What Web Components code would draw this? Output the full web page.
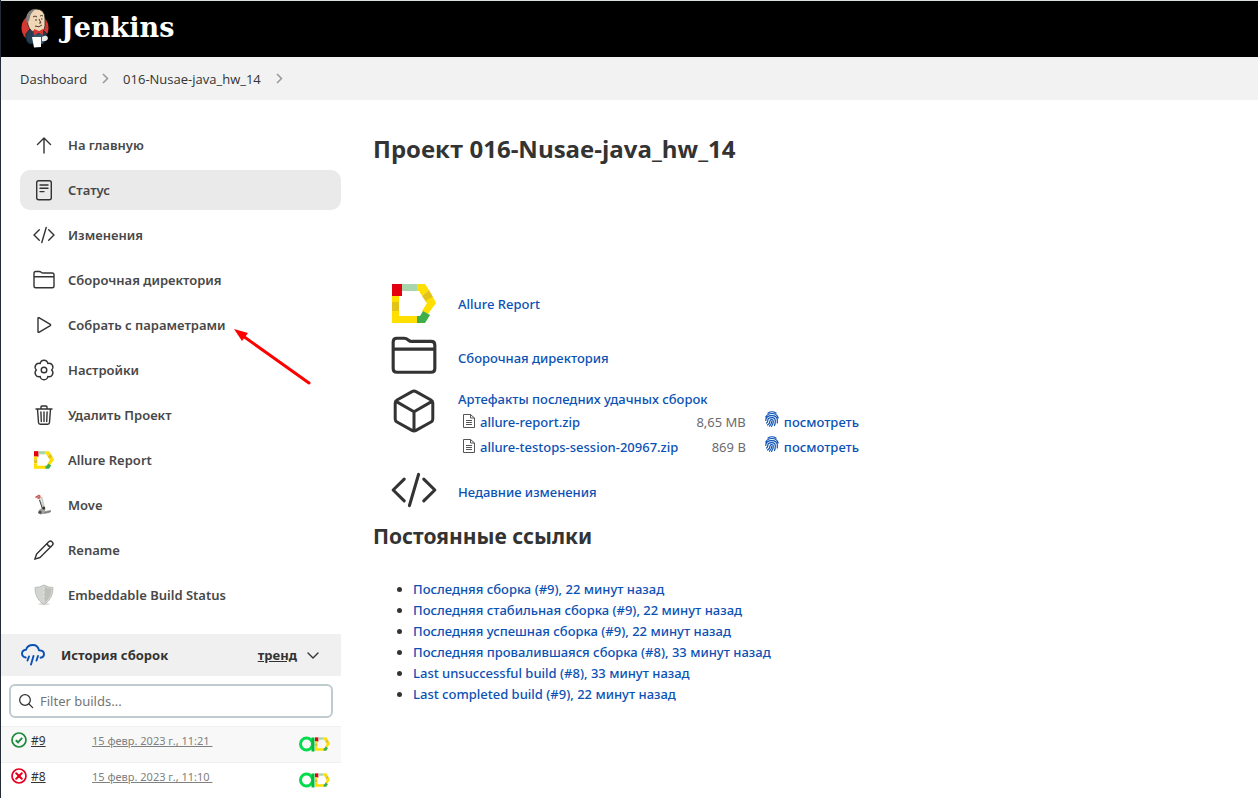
<!DOCTYPE html>
<html lang="ru">
<head>
<meta charset="utf-8">
<meta name="viewport" content="width=device-width, initial-scale=1">
<title>016-Nusae-java_hw_14 [Jenkins]</title>
<style>
  html { background: #fff; }
  body {
    margin: 0;
    font: 500 13px/20px "Noto Sans", "Open Sans", sans-serif;
    color: #333;
    --link: #0b51b4;
    --bar: #f2f2f2;
    --muted: #808080;
  }
</style>
</head>
<body>
<jenkins-page></jenkins-page>

<script>
const ALLURE = `
  <path fill="#e3000f" d="M0 0h10v12H0z"/>
  <path fill="#a8d5ab" d="M10 0h15v7H10z"/>
  <path fill="#ffdf00" d="M25 0h8l4 6-7 6-3-5h-2z"/>
  <path fill="#e2c317" d="M37 6l4 7-7 5-4-6z"/>
  <path fill="#ffdf00" d="M41 13l3 6-8 11-6-3 5-8-2-2z"/>
  <path fill="#ffdf00" d="M0 12h7v6H0z"/>
  <path fill="#e2c317" d="M0 18h7v9H0z"/>
  <path fill="#ffdf00" d="M0 27h7v5h18v7H0z"/>
  <path fill="#3fae49" d="M31 27l7 4-5 8h-8v-7h3z"/>`;
const FINGER = `<g fill="none" stroke="currentColor" stroke-width="1.200" stroke-linecap="round">
  <path d="M3 2Q7 -.5 11 2M.8 6Q2.500 2.500 7 2.500Q12 2.500 13.200 7M.8 9.500Q.5 4.800 7 4.700Q12 4.700 12.300 9V12M1.500 12Q3 11 2.800 9Q3 6.700 7 6.700Q10.300 6.700 10.300 10Q10.300 13 9.500 14.500M2.500 14Q5 12.500 5 10Q5 8.600 6.700 8.600Q8.300 8.600 8.300 10.300Q8.300 13 6.500 15.500M6.700 10.500Q6.700 13 4.500 15"/></g>`;

/* name: [viewBox, markup] */
const ICONS = {
  up: ['0 0 24 24', '<path class="s" d="M5.500 11.500 12 5l6.500 6.500M12 5v15"/>'],
  doc: ['0 0 24 24', '<rect class="s" x="4.700" y="2.700" width="14.600" height="19" rx="2"/><path class="s" d="M8 7h8M8 10.300h8M8 13.600h4"/>'],
  code: ['0 0 24 24', '<path class="s" d="M7.300 6.800 2 12l5.300 5.200M16.700 6.800 22 12l-5.300 5.200M14.200 4.500 9.800 19.500"/>'],
  folder: ['0 0 24 24', '<path class="s" d="M2 18V5.300Q2 3.500 3.800 3.500H7.300Q8.300 3.500 9.200 4.300T11.200 5H20.200Q22 5 22 6.800V18Q22 19.800 20.200 19.800H3.800Q2 19.800 2 18ZM2 8.700H22"/>'],
  play: ['0 0 24 24', '<path class="s" d="M6 5.200v13.600q0 .9.900.5L18.300 12.600q.7-.6 0-1.200L6.900 4.700Q6 4.300 6 5.200z"/>'],
  gear: ['0 0 24 24', '<path class="s" d="M19.600 12A3.850 3.850 0 0 1 15.800 18.500A3.850 3.850 0 0 1 8.200 18.500A3.850 3.850 0 0 1 4.400 12A3.850 3.850 0 0 1 8.200 5.500A3.850 3.850 0 0 1 15.800 5.500A3.850 3.850 0 0 1 19.600 12Z"/><circle class="s" cx="12" cy="12" r="2.800"/>'],
  trash: ['0 0 24 24', '<path class="s" d="M4 6h16M5.500 6l1 13.500q.1 1.800 1.800 1.800h7.400q1.700 0 1.800-1.800L18.500 6M9 6V3.900q0-.9.900-.9h4.200q.9 0 .9.900V6M12 9v9.500M8.900 9l.4 9.500M15.100 9l-.4 9.500"/>'],
  pencil: ['0 0 24 24', '<path class="s" d="M2.800 21.200 4.600 16 16.800 3.800q1.700-1.500 3.400.1t.1 3.300L8 19.500zM15 5.500q1 3 3.800 3.400"/>'],
  allure: ['0 0 44 39', ALLURE],
  move: ['0 0 24 24', '<path d="M7 4l5 14M9.500 4l3.500 13" fill="none" stroke="#c9c9c5" stroke-width="1.500"/><path d="M7.500 7l3 9" fill="none" stroke="#444" stroke-width="1"/><path d="M3.500 4.500 7 2.500l1.500 1M5.500 5.500 8.500 4" fill="none" stroke="#c95b5b" stroke-width="1.500"/><path d="M7 17l4-3 2 1v3l6-1-1 3-10 1.500z" fill="#a4a5a0"/><circle cx="8" cy="19.300" r="1.800" fill="#555"/><circle cx="11.700" cy="15" r="1.500" fill="#333"/><path d="M12 20l7-2" stroke="#777"/>'],
  shield: ['0 0 24 24', '<ellipse cx="12" cy="21" rx="6" ry="1.200" fill="#ddd"/><path d="M3 4.500Q8 4.500 12 2q4 2.500 9 2.500Q21 16 12 21.500 3 16 3 4.500z" fill="#d3d5d1" stroke="#bcbeba"/><path d="M12 3.500q3 2 7.500 2.200Q19 15.500 12 20z" fill="#bec0bc"/><path d="M12 4v16" stroke="#e2e2e2" stroke-width="1" stroke-dasharray="3 1"/>'],
  cloud: ['0 0 24 24', '<path fill="none" stroke="#0b51b4" stroke-width="1.900" stroke-linecap="round" stroke-linejoin="round" d="M4.800 14.500Q1 13.700 1 10.500 1 7.200 5 6.700 6.500 2 12 2q4.600 0 6 5.200 5 .2 5 4 0 3-3.500 3.500M8 13.500 6.500 17.500M12.500 13 10 21.500M17 13 15.500 17.500"/>'],
  chevron: ['0 0 24 24', '<path class="s" d="M7 10l5 5 5-5"/>'],
  search: ['0 0 24 24', '<circle class="s" cx="10.500" cy="10.500" r="8"/><path class="s" d="M16.500 16.500l5.500 5.500"/>'],
  crumb: ['0 0 16 16', '<path d="M6 3 10.500 7.500 6 12" fill="none" stroke="#999" stroke-width="1.500"/>'],
  ok: ['0 0 16 16', '<circle cx="8" cy="8" r="7" fill="none" stroke="#1c8b3c" stroke-width="1.700"/><path d="M4.800 8.300 7 10.300l4.200-4.500" fill="none" stroke="#1c8b3c" stroke-width="1.900"/>'],
  fail: ['0 0 16 16', '<circle cx="8" cy="8" r="7" fill="none" stroke="#e6001f" stroke-width="1.700"/><path d="M5.200 5.200l5.600 5.600M10.800 5.200l-5.600 5.600" stroke="#e6001f" stroke-width="2" stroke-linecap="round"/>'],
  cube: ['0 0 24 24', '<path class="s" d="M12 2q.5 0 1 .3l7.500 4.200q.9.500.9 1.500v8q0 1-.9 1.500L13 21.700q-1 .6-2 0l-7.500-4.200q-.9-.5-.9-1.500V8q0-1 .9-1.500L11 2.300q.5-.3 1-.3zM3 7.200l9 5.200 9-5.200M12 12.400V22"/>'],
  file: ['0 0 12 14', '<path d="M1 .5h6.500L11.500 4v9.500H.5V.5zM7.500.5V4h4M3 6.500h6M3 8.500h6M3 10.500h6" fill="none" stroke="#555"/>'],
  finger: ['0 0 14 16', FINGER],
  testops: ['0 0 16 16', '<circle cx="7.500" cy="8" r="6" fill="none" stroke="#04dc4c" stroke-width="3"/><path d="M14 1.500v14" stroke="#06b83f" stroke-width="3"/>'],
  butler: ['0 0 28 40', `
    <ellipse cx="14" cy="20" rx="13.500" ry="14" fill="#d33833"/>
    <path d="M5 26q-1 8 4 10l14-1 3-9-5-5H9z" fill="#243f52" stroke="#0d1c26" stroke-width=".8"/>
    <path d="M6 11Q6 1 15 1q9 0 9 10v7q-1 7-8 7-7-1-9-8z" fill="#f0d6b7" stroke="#26221d" stroke-width=".8"/>
    <path d="M6 15q-2-6 1-10 3-4 8-4-5 3-6 8l-1 4z" fill="#81807b"/>
    <path d="M12 9q2-2 4 0M19 8q2-1 3 0M14 12h2M20 11h1.500M18 11l2 4h-2M14 18q4 2 7-1" fill="none" stroke="#48382d" stroke-width="1"/>
    <path d="M12 22l5 5 5-4v13h-9z" fill="#35566b"/>
    <path d="M13 21l5 2 4-2v6l-4-2-5 2z" fill="#d33833"/>
    <path d="M11 29h9v10l-7 .5z" fill="#fff"/>
    <path d="M21 29q5-3 6 1-1 4-6 3z" fill="#e9e9e9"/>`]
};

class JIcon extends HTMLElement {
  connectedCallback() {
    const [box, body] = ICONS[this.getAttribute('name')];
    const root = this.attachShadow({ mode: 'open' });
    root.innerHTML = `<style>
      :host { display: block; flex: none; width: 24px; height: 24px; color: #333; }
      :host([name=finger]) { color: inherit; }
      svg { display: block; width: 100%; height: 100%; }
      .s { fill: none; stroke: currentColor; stroke-width: var(--stroke, 1.400); stroke-linecap: round; stroke-linejoin: round; }
    </style><svg viewBox="${box}" aria-hidden="true">${body}</svg>`;
  }
}
customElements.define('j-icon', JIcon);

function define(name, html) {
  const template = document.createElement('template');
  template.innerHTML = html;
  customElements.define(name, class extends HTMLElement {
    constructor() {
      super();
      this.attachShadow({ mode: 'open' }).append(template.content.cloneNode(true));
    }
  });
}

define('jenkins-header', `
  <style>
    :host { display: block; background: #000; border-top: 1px solid #d9dfe0; }
    a { display: flex; align-items: center; gap: 12px; width: max-content; height: 54px; padding: 0 0 2px 20px;
        color: #fff; text-decoration: none; font: bold 27px/36px "DejaVu Serif", serif; }
    j-icon { width: 28px; height: 40px; }
  </style>
  <a href="#home"><j-icon name="butler"></j-icon><span>Jenkins</span></a>`);

define('jenkins-crumbs', `
  <style>
    :host { display: block; background: var(--bar); }
    ol { display: flex; align-items: center; gap: 10px; height: 43px; margin: 0; padding: 0 0 0 19px; list-style: none; font-family: "Open Sans", sans-serif; font-weight: 400; }
    li { display: flex; align-items: center; gap: 10px; }
    a { color: inherit; text-decoration: none; }
    j-icon { width: 16px; height: 16px; }
  </style>
  <nav aria-label="Breadcrumb"><ol>
    <li><a href="#dashboard">Dashboard</a><j-icon name="crumb"></j-icon></li>
    <li><a href="#project">016-Nusae-java_hw_14</a><j-icon name="crumb"></j-icon></li>
  </ol></nav>`);

define('side-task', `
  <style>
    :host { display: block; border-radius: 10px; }
    :host([active]) { background: #eaeaea; }
    ::slotted(a) { display: flex; align-items: center; gap: 12px; height: 40px; padding: 0 12px; color: inherit; text-decoration: none; }
  </style>
  <slot></slot>`);

define('side-tasks', `
  <style>
    :host { display: block; padding: 25px 0 19px 19px; }
    nav { display: grid; gap: 5px; font-weight: 600; color: #484848; }
    j-icon[name=allure] { width: 20px; height: 18px; margin: 0 2px; }
  </style>
  <nav aria-label="Задачи">
    <side-task><a href="#up"><j-icon name="up"></j-icon>На главную</a></side-task>
    <side-task active><a href="#status"><j-icon name="doc"></j-icon>Статус</a></side-task>
    <side-task><a href="#changes"><j-icon name="code"></j-icon>Изменения</a></side-task>
    <side-task><a href="#ws"><j-icon name="folder"></j-icon>Сборочная директория</a></side-task>
    <side-task><a href="#build"><j-icon name="play"></j-icon>Собрать с параметрами</a></side-task>
    <side-task><a href="#configure"><j-icon name="gear"></j-icon>Настройки</a></side-task>
    <side-task><a href="#delete"><j-icon name="trash"></j-icon>Удалить Проект</a></side-task>
    <side-task><a href="#allure"><j-icon name="allure"></j-icon>Allure Report</a></side-task>
    <side-task><a href="#move"><j-icon name="move"></j-icon>Move</a></side-task>
    <side-task><a href="#rename"><j-icon name="pencil"></j-icon>Rename</a></side-task>
    <side-task><a href="#badge"><j-icon name="shield"></j-icon>Embeddable Build Status</a></side-task>
  </nav>`);

define('build-history', `
  <style>
    :host { display: block; }
    header { display: flex; align-items: center; height: 42px; padding: 0 16px 0 20px; background: #f0f0f0; }
    h2 { flex: 1; margin: 0 0 0 16px; font-size: 13px; line-height: 20px; font-weight: 700; }
    header a { color: inherit; font-weight: 700; margin-right: 4px; }
    label { display: flex; align-items: center; gap: 6px; height: 30px; margin: 8px; padding: 0 7px; border: 2px solid #c0cbd0; border-radius: 6px; }
    label j-icon { width: 16px; height: 16px; --stroke: 1.900; }
    input { flex: 1; min-width: 0; padding: 0; border: 0; outline: 0; background: none; color: inherit; font: inherit; font-weight: 400; }
    input::placeholder { color: #757575; opacity: 1; }
    table { width: 100%; border-collapse: collapse; font-size: 12px; line-height: 16px; font-weight: 400; }
    tr { height: 36px; }
    tr:nth-child(odd) { background: #f8f8f8; }
    td { padding: 6px 0 0; vertical-align: top; border-top: 1px solid #f0f0f0; }
    td:first-child { width: 91px; }
    td:nth-child(2) { font-size: 11px; }
    td:last-child { width: 42px; padding-top: 9px; }
    .n { display: flex; align-items: center; gap: 4px; padding-left: 10px; }
    .n j-icon { width: 16px; height: 16px; margin-top: -2px; }
    .n a { color: #333; }
    td > a { color: var(--muted); }
    .b { display: flex; }
    .b j-icon { width: 16px; height: 16px; }
    .b j-icon[name=allure] { width: 15px; height: 14px; margin-top: 1px; }
  </style>
  <header><j-icon name="cloud"></j-icon><h2>История сборок</h2><a href="#trend">тренд</a><j-icon name="chevron"></j-icon></header>
  <label><j-icon name="search"></j-icon><input type="text" placeholder="Filter builds..." aria-label="Filter builds"></label>
  <table>
    <tr><td><span class="n"><j-icon name="ok"></j-icon><a href="#9">#9</a></span></td><td><a href="#9">15 февр. 2023 г., 11:21&nbsp;</a></td><td><span class="b"><j-icon name="testops"></j-icon><j-icon name="allure"></j-icon></span></td></tr>
    <tr><td><span class="n"><j-icon name="fail"></j-icon><a href="#8">#8</a></span></td><td><a href="#8">15 февр. 2023 г., 11:10&nbsp;</a></td><td><span class="b"><j-icon name="testops"></j-icon><j-icon name="allure"></j-icon></span></td></tr>
  </table>`);

define('summary-row', `
  <style>
    :host { display: flex; align-items: center; gap: 19px; padding-left: 16px; min-height: 54px; }
    ::slotted(j-icon) { width: 50px; height: 50px; }
    ::slotted(a) { color: var(--link); text-decoration: none; }
  </style>
  <slot name="icon"></slot><slot></slot>`);

define('artifact-list', `
  <style>
    :host { display: block; padding-top: 4px; line-height: 21px; }
    a { color: var(--link); text-decoration: none; }
    table { border-collapse: collapse; line-height: 25px; }
    td { padding: 0; }
    td:nth-child(1) { width: 22px; }
    td:nth-child(3) { padding-left: 18px; text-align: right; font-weight: 400; color: #6b6b70; }
    td:nth-child(4) { padding-left: 19px; }
    td:nth-child(4) a { display: flex; gap: 5px; }
    j-icon[name=file] { width: 12px; height: 14px; margin-left: 5px; margin-bottom: 4px; }
    j-icon[name=finger] { width: 14px; height: 16px; margin-top: 1px; }
  </style>
  <a href="#artifacts">Артефакты последних удачных сборок</a>
  <table>
    <tr><td><j-icon name="file"></j-icon></td><td><a href="#a1">allure-report.zip</a></td><td>8,65 MB</td><td><a href="#v1"><j-icon name="finger"></j-icon>посмотреть</a></td></tr>
    <tr><td><j-icon name="file"></j-icon></td><td><a href="#a2">allure-testops-session-20967.zip</a></td><td>869 B</td><td><a href="#v2"><j-icon name="finger"></j-icon>посмотреть</a></td></tr>
  </table>`);

define('project-main', `
  <style>
    :host { display: block; padding: 32px 32px 0; }
    h1 { margin: 0 0 111px; font: 700 24px/34px "Open Sans", sans-serif; }
    h2 { margin: 3px 0 29px; font-size: 21px; line-height: 28px; font-weight: 700; }
    ul { margin: 0; padding: 0 0 0 40px; line-height: 21px; }
    a { color: var(--link); text-decoration: none; }
    j-icon { --stroke: 1.500; }
    j-icon[name=allure] { width: 44px; height: 39px; margin: 0 3px 2px; }
    .folder j-icon, .code j-icon { margin-bottom: 4px; }
    .tall { min-height: 80px; align-items: flex-start; }
    .tall j-icon { width: 48px; height: 48px; margin: 2px 1px 0; }
  </style>
  <h1>Проект 016-Nusae-java_hw_14</h1>
  <summary-row><j-icon slot="icon" name="allure"></j-icon><a href="#allure">Allure Report</a></summary-row>
  <summary-row class="folder"><j-icon slot="icon" name="folder"></j-icon><a href="#ws">Сборочная директория</a></summary-row>
  <summary-row class="tall"><j-icon slot="icon" name="cube"></j-icon><artifact-list></artifact-list></summary-row>
  <summary-row class="code"><j-icon slot="icon" name="code"></j-icon><a href="#changes">Недавние изменения</a></summary-row>
  <h2>Постоянные ссылки</h2>
  <ul>
    <li><a href="#l1">Последняя сборка (#9), 22 минут назад</a></li>
    <li><a href="#l2">Последняя стабильная сборка (#9), 22 минут назад</a></li>
    <li><a href="#l3">Последняя успешная сборка (#9), 22 минут назад</a></li>
    <li><a href="#l4">Последняя провалившаяся сборка (#8), 33 минут назад</a></li>
    <li><a href="#l5">Last unsuccessful build (#8), 33 минут назад</a></li>
    <li><a href="#l6">Last completed build (#9), 22 минут назад</a></li>
  </ul>`);

define('pointer-arrow', `
  <style>
    :host { display: block; position: absolute; left: 231px; top: 327px; width: 80px; height: 60px; pointer-events: none; }
    svg { display: block; }
  </style>
  <svg width="80" height="60" viewBox="0 0 80 60" aria-hidden="true"><path d="M77 56 11 9" stroke="#f00" stroke-width="3" stroke-linecap="round"/><path d="M2 2l14 4-6 8z" fill="#f00"/></svg>`);

define('jenkins-page', `
  <style>
    :host { display: block; position: relative; box-sizing: border-box; min-height: 100vh; border-left: 1px solid #262b38; }
    .cols { display: grid; grid-template-columns: 340px minmax(0, 1fr); }
  </style>
  <jenkins-header></jenkins-header>
  <jenkins-crumbs></jenkins-crumbs>
  <div class="cols">
    <aside><side-tasks></side-tasks><build-history></build-history></aside>
    <main><project-main></project-main></main>
  </div>
  <pointer-arrow></pointer-arrow>`);
</script>
</body>
</html>
